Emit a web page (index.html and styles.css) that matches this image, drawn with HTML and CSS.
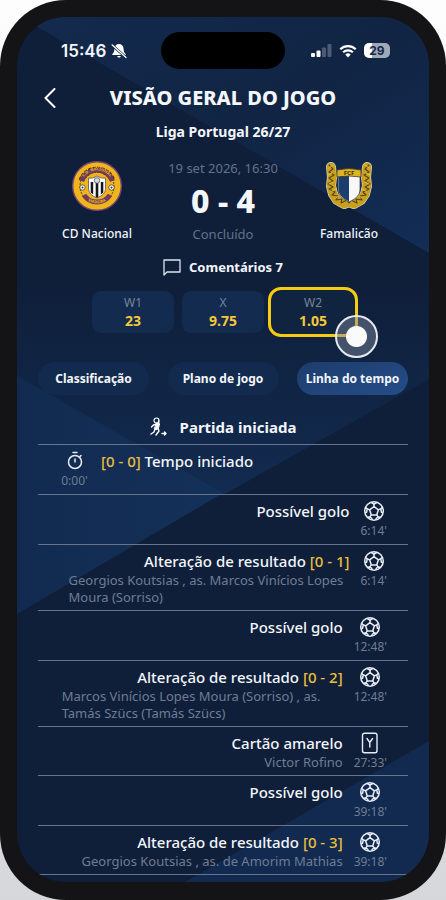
FILE: index.html
```html
<!DOCTYPE html>
<html lang="pt">
<head>
    <meta charset="UTF-8">
    <meta name="viewport" content="width=device-width, initial-scale=1.0">
    <title>Visão geral do jogo</title>
    <link rel="stylesheet" href="styles.css">
</head>
<body>
    <!-- Shared icons -->
    <svg class="sprite" aria-hidden="true">
        <symbol id="ball" viewBox="0 0 22 22">
            <g fill="none" stroke="currentColor" stroke-width="1.5" stroke-linejoin="round">
                <circle cx="11" cy="11" r="9.3"/>
                <path d="M11 6.600l4.400 3.200-1.700 5.100H8.300L6.600 9.800z"/>
                <path d="M11 6.600V4M15.400 9.800l2.400-.9M13.700 14.900l1.600 2.200M8.300 14.900l-1.600 2.200M6.600 9.800l-2.400-.9"/>
                <path d="M7.800 2.400L11 4l3.200-1.600M19.500 7.300l-1.700 1.600.6 3.400 1.600.5M17.800 17.300l-2.500-.2-1.900 1-.7 2M9.300 20.100l-.7-2-1.900-1-2.500.2M2 12.800l1.600-.5.6-3.400-1.700-1.600"/>
            </g>
        </symbol>
    </svg>

    <div class="phone">
        <div class="screen">
            <svg class="backdrop" viewBox="0 0 412 865" preserveAspectRatio="none" aria-hidden="true">
                <defs>
                    <linearGradient id="bgTop" x1="0" y1="0" x2="1" y2="1">
                        <stop offset="0" stop-color="#132b4f"/>
                        <stop offset=".5" stop-color="#112443"/>
                        <stop offset="1" stop-color="#122d56"/>
                    </linearGradient>
                    <linearGradient id="bgMid" x1="0" y1="0" x2="0" y2="1">
                        <stop offset="0" stop-color="#0f1f3a"/>
                        <stop offset="1" stop-color="#122b50"/>
                    </linearGradient>
                    <linearGradient id="bgLeft" x1="0" y1="0" x2="1" y2="0">
                        <stop offset="0" stop-color="#122a50"/>
                        <stop offset="1" stop-color="#143159"/>
                    </linearGradient>
                </defs>
                <path fill="#0f1f3a" d="M0 0h412v865H0z"/>
                <path fill="url(#bgTop)" d="M0 0h412v236L0-2z"/>
                <path fill="url(#bgMid)" d="M0 270h412v92L206 478 0 360z"/>
                <path fill="url(#bgLeft)" d="M0 359l206 117L0 597z"/>
                <path fill="#122a50" d="M412 724v141H168z"/>
            </svg>

            <div class="status-bar">
                <div class="status-left">
                    <span class="clock">15:46</span>
                    <svg width="16" height="16" viewBox="0 0 16 16">
                        <path fill="#fff" d="M8 1c-2.500 0-4.300 1.900-4.500 4.300C3.300 8.500 2.700 9.800 1.300 11.200c-.3.400 0 .8.400.8h12.600c.4 0 .7-.4.400-.8-1.400-1.400-2-2.700-2.200-5.900C12.300 2.900 10.500 1 8 1zM6.200 13h3.600c-.2 1-.9 1.600-1.800 1.600S6.400 14 6.200 13z"/>
                        <path stroke="#122849" stroke-width="2.600" d="M1 2l14 12.500"/>
                        <path stroke="#fff" stroke-width="1.200" stroke-linecap="round" d="M1 1.800l14 12.700"/>
                    </svg>
                </div>
                <div class="island"></div>
                <div class="status-right">
                    <svg width="21" height="14" viewBox="0 0 21 14" fill="#fff">
                        <rect x="0" y="9" width="4" height="4" rx="1"/>
                        <rect x="5.500" y="6.500" width="4" height="6.500" rx="1"/>
                        <rect x="11" y="3.500" width="4" height="9.500" rx="1" opacity=".25"/>
                        <rect x="16.500" y="0" width="4" height="13" rx="1" opacity=".25"/>
                    </svg>
                    <svg width="18" height="14" viewBox="0 0 18 14" fill="none" stroke="#fff" stroke-width="2.200">
                        <path d="M1.300 5.200a11 11 0 0 1 15.400 0M4.100 8.300a7 7 0 0 1 9.800 0"/>
                        <path fill="#fff" stroke="none" d="M9 13.400l-2.700-2.800a3.900 3.900 0 0 1 5.400 0z"/>
                    </svg>
                    <span class="battery">29</span>
                </div>
            </div>

            <header class="top">
                <button class="back" type="button" aria-label="Voltar">
                    <svg width="12" height="20" viewBox="0 0 12 20" fill="none" stroke="#fff" stroke-width="2" stroke-linecap="round" stroke-linejoin="round"><path d="M10.500 1L1.500 10l9 9"/></svg>
                </button>
                <h1>VISÃO GERAL DO JOGO</h1>
            </header>
            <p class="league">Liga Portugal 26/27</p>

            <section class="match">
                <div class="team">
                    <svg width="50" height="50" viewBox="0 0 50 50">
                        <defs>
                            <path id="arcTop" d="M10.500 18a16.500 16.500 0 0 1 29 0"/>
                            <path id="arcBottom" d="M11 36a18.500 18.500 0 0 0 28 0"/>
                        </defs>
                        <circle cx="25" cy="25" r="24.300" fill="#f0b51c" stroke="#7b4575" stroke-width="1.400"/>
                        <circle cx="25" cy="25" r="17" fill="none" stroke="#5d4423" stroke-width="1" stroke-dasharray="2 1"/>
                        <path d="M9.500 19.500a16.500 16.500 0 0 1 31 0" fill="none" stroke="#4a3020" stroke-width="6" stroke-dasharray="3 1"/>
                        <path d="M9.500 20a16.500 16.500 0 0 1 31 0" fill="none" stroke="#713c5c" stroke-width="4.600"/>
                        <path d="M12 34a15.500 15.500 0 0 0 26 0" fill="none" stroke="#713c5c" stroke-width="5"/>
                        <text class="crest-text"><textPath href="#arcTop" startOffset="50%">C.D. NACIONAL</textPath></text>
                        <text class="crest-text"><textPath href="#arcBottom" startOffset="50%">MADEIRA</textPath></text>
                        <path d="M16.500 17q4.500 1 8.500-2 4 3 8.500 2v10c0 5-3 7.500-8.500 10-5.500-2.500-8.500-5-8.500-10z" fill="#fff" stroke="#555" stroke-width=".8"/>
                        <path d="M18.700 21h2.500v12.600l-2.500-2.200zM23.700 21h2.600v15l-1.300.7-1.300-.7zM28.800 21h2.500v10.400l-2.500 2.200z" fill="#17171c"/>
                        <circle cx="25" cy="19.500" r="2.800" fill="#d8d8dc" stroke="#444" stroke-width=".7"/>
                        <g fill="#fff" stroke="#44382a" stroke-width=".8"><circle cx="10.500" cy="26.500" r="2.700"/><circle cx="39.500" cy="26.500" r="2.700"/></g>
                        <g fill="#333"><circle cx="10.500" cy="26.500" r="1"/><circle cx="39.500" cy="26.500" r="1"/></g>
                    </svg>
                    <span class="team-name">CD Nacional</span>
                </div>

                <div class="result">
                    <span class="muted">19 set 2026, 16:30</span>
                    <strong class="score">0 - 4</strong>
                    <span class="muted">Concluído</span>
                </div>

                <div class="team">
                    <svg width="50" height="50" viewBox="0 0 50 50">
                        <g stroke-linejoin="round" stroke-linecap="round" fill="none">
                            <path stroke="#d5d3bd" stroke-width="10" d="M7 6l1 10-1 9 2 8 4 6 7 4 5-2 5 2 7-4 4-6 2-8-1-9 1-10"/>
                            <path stroke="#c9a01c" stroke-width="8.600" d="M7 6l1 10-1 9 2 8 4 6 7 4 5-2 5 2 7-4 4-6 2-8-1-9 1-10"/>
                            <path stroke="#54441c" stroke-width="1.100" d="M5 4l4 4-4 3 5 3-5 3 4 3-5 3 5 3-4 2 6 3-3 3 6 1-2 4 6-1-1 4 6-3 2 3M45 4l-4 4 4 3-5 3 5 3-4 3 5 3-5 3 4 2-6 3 3 3-6 1 2 4-6-1 1 4-6-3-2 3"/>
                            <path stroke="#e9c63c" stroke-width="1" d="M9 4L5 7M8 12l-4 2M9 21l-4 2M8 30l4-2M12 37l4-3M41 4l4 3M42 12l4 2M41 21l4 2M42 30l-4-2M38 37l-4-3"/>
                        </g>
                        <path d="M14 13h22v15c0 6-3 9-11 13-8-4-11-7-11-13z" fill="#f7f7fa" stroke="#333" stroke-width=".7"/>
                        <path d="M14.500 15H25v25.500c-7.500-4-10.500-7-10.500-12.500z" fill="#1d3e6d"/>
                        <path d="M13 9q12-3 24 0v7q-12-2-24 0z" fill="#dfb322" stroke="#403516" stroke-width=".8"/>
                        <text class="crest-initials" x="25" y="14">FCF</text>
                    </svg>
                    <span class="team-name">Famalicão</span>
                </div>
            </section>

            <a class="comments" href="#comentarios">
                <svg width="18" height="17" viewBox="0 0 18 17" fill="none" stroke="#dfe5ee" stroke-width="1.300" stroke-linejoin="round"><path d="M1 16V1h16v12H4z"/></svg>
                Comentários 7
            </a>

            <div class="odds">
                <button class="odd" type="button"><span>W1</span><b>23</b></button>
                <button class="odd" type="button"><span>X</span><b>9.75</b></button>
                <button class="odd odd-selected" type="button"><span>W2</span><b>1.05</b><i class="touch"></i></button>
            </div>

            <nav class="tabs">
                <button type="button">Classificação</button>
                <button type="button">Plano de jogo</button>
                <button class="active" type="button">Linha do tempo</button>
            </nav>

            <section class="timeline">
                <h2>
                    <svg width="18" height="20" viewBox="0 0 18 20" fill="none" stroke="#fff" stroke-linecap="round" stroke-linejoin="round">
                        <circle cx="6.500" cy="3.500" r="2.500" stroke-width="1.200"/>
                        <path fill="#fff" stroke-width="1" d="M7 6l2.500 1-1 4-2 2-2-1z"/>
                        <path stroke-width="1.400" d="M7 7L3.500 8 1.500 10M9 7l-.5-3M5 12l-1 3-3 2M8 11l1 3-3 4"/>
                        <path stroke-width="1.400" d="M12 16.500h4M14.500 15l1.500 1.500-1.500 1.500"/>
                    </svg>
                    Partida iniciada
                </h2>
                <ul>
                    <li class="event event-home">
                        <div class="when">
                            <svg width="20" height="22" viewBox="0 0 20 22" fill="none" stroke="currentColor" stroke-width="1.500" stroke-linecap="round"><circle cx="10" cy="12" r="6.500"/><path d="M8 2.500h4M10 9v3M15 6.500l1-1"/></svg>
                            <time>0:00'</time>
                        </div>
                        <div class="what"><h3><em>[0 - 0]</em> Tempo iniciado</h3></div>
                    </li>
                    <li class="event">
                        <div class="when"><svg width="22" height="22"><use href="#ball"/></svg><time>6:14'</time></div>
                        <div class="what"><h3>Possível golo</h3></div>
                    </li>
                    <li class="event event-detail">
                        <div class="when"><svg width="22" height="22"><use href="#ball"/></svg><time>6:14'</time></div>
                        <div class="what">
                            <h3>Alteração de resultado <em>[0 - 1]</em></h3>
                            <p>Georgios Koutsias , as. Marcos Vinícios Lopes Moura (Sorriso)</p>
                        </div>
                    </li>
                    <li class="event">
                        <div class="when"><svg width="22" height="22"><use href="#ball"/></svg><time>12:48'</time></div>
                        <div class="what"><h3>Possível golo</h3></div>
                    </li>
                    <li class="event event-detail">
                        <div class="when"><svg width="22" height="22"><use href="#ball"/></svg><time>12:48'</time></div>
                        <div class="what">
                            <h3>Alteração de resultado <em>[0 - 2]</em></h3>
                            <p>Marcos Vinícios Lopes Moura (Sorriso) , as. Tamás Szücs (Tamás Szücs)</p>
                        </div>
                    </li>
                    <li class="event event-detail">
                        <div class="when">
                            <svg width="22" height="22" viewBox="0 0 22 22" fill="none" stroke="currentColor" stroke-width="1.400" stroke-linecap="round"><rect x="3.500" y="1.200" width="14.500" height="19.600" rx="2"/><path d="M8 6.500l2.800 4 2.800-4M10.800 10.500v4.500"/></svg>
                            <time>27:33'</time>
                        </div>
                        <div class="what">
                            <h3>Cartão amarelo</h3>
                            <p>Victor Rofino</p>
                        </div>
                    </li>
                    <li class="event">
                        <div class="when"><svg width="22" height="22"><use href="#ball"/></svg><time>39:18'</time></div>
                        <div class="what"><h3>Possível golo</h3></div>
                    </li>
                    <li class="event event-detail">
                        <div class="when"><svg width="22" height="22"><use href="#ball"/></svg><time>39:18'</time></div>
                        <div class="what">
                            <h3>Alteração de resultado <em>[0 - 3]</em></h3>
                            <p>Georgios Koutsias , as. de Amorim Mathias</p>
                        </div>
                    </li>
                </ul>
            </section>
        </div>
    </div>
</body>
</html>
```

FILE: styles.css
```css
* {
    box-sizing: border-box;
    margin: 0;
    padding: 0;
}
body {
    font-family: "Noto Sans", "Open Sans", sans-serif;
    color: #f3f6fa;
    background: linear-gradient(#fdfdfd, #d6d7db);
}
button {
    font: inherit;
    color: inherit;
    border: none;
    background: none;
    cursor: pointer;
}
svg {
    display: block;
    flex: none;
}
.sprite {
    display: none;
}

/* Phone shell */
.phone {
    min-height: 100vh;
    padding: 17px;
    padding-bottom: 18px;
    border-radius: 66px;
    background: #141416;
    display: flex;
}
.screen {
    position: relative;
    z-index: 0;
    flex: 1;
    border-radius: 49px;
    overflow: hidden;
    padding: 0 21px;
}
.backdrop {
    position: absolute;
    inset: 0;
    width: 100%;
    height: 100%;
    z-index: -1;
}

/* Status bar */
.status-bar {
    display: grid;
    grid-template-columns: 1fr 124px 1fr;
    align-items: center;
    padding-top: 15px;
}
.status-left,
.status-right {
    display: flex;
    align-items: center;
}
.status-left {
    gap: 4px;
    padding-left: 23px;
}
.status-right {
    gap: 7px;
    justify-content: flex-end;
    padding-right: 18px;
}
.clock {
    font: 600 17px/20px Inter, sans-serif;
}
.island {
    height: 37px;
    border-radius: 19px;
    background: #000;
}
.battery {
    width: 26px;
    border-radius: 5px;
    background: linear-gradient(90deg, #fff 30%, #a0a9b8 30%);
    color: #13294a;
    font: 700 12px/15px Inter, sans-serif;
    text-align: center;
}

/* Heading */
.top {
    display: grid;
    grid-template-columns: 22px 1fr 22px;
    align-items: center;
    padding-top: 14px;
}
.back {
    justify-self: end;
    padding: 4px;
}
h1 {
    font-size: 20px;
    font-weight: 800;
    line-height: 30px;
    text-align: center;
    white-space: nowrap;
}
.league {
    padding-top: 9px;
    font-size: 14px;
    font-weight: 700;
    line-height: 20px;
    text-align: center;
}

/* Teams and score */
.match {
    display: grid;
    grid-template-columns: 118px 1fr 118px;
    padding-top: 16px;
}
.team {
    display: flex;
    flex-direction: column;
    align-items: center;
    gap: 13px;
    padding-top: 3px;
}
.team-name {
    font-size: 12px;
    font-weight: 500;
    line-height: 20px;
}
.result {
    display: flex;
    flex-direction: column;
    align-items: center;
}
.muted {
    color: #64718a;
    font-size: 13px;
    line-height: 20px;
}
.score {
    font-size: 32px;
    font-weight: 800;
    line-height: 46px;
}
.crest-text {
    font-size: 4px;
    font-weight: 700;
    fill: #f0b51c;
    text-anchor: middle;
}
.crest-initials {
    font-size: 6px;
    font-weight: 700;
    fill: #3b2d12;
    text-anchor: middle;
}
.comments {
    display: flex;
    justify-content: center;
    align-items: center;
    gap: 8px;
    padding-top: 13px;
    color: inherit;
    font-size: 13px;
    font-weight: 700;
    line-height: 20px;
    text-decoration: none;
}

/* Odds */
.odds {
    display: flex;
    justify-content: center;
    gap: 8px;
    padding-top: 14px;
}
.odd {
    position: relative;
    width: 82px;
    padding: 3px 0;
    border-radius: 9px;
    background: #122b4e;
}
.odd span,
.odd b {
    display: block;
    line-height: 18px;
}
.odd span {
    color: #77849a;
    font-size: 12px;
}
.odd b {
    color: #f5c83a;
    font-size: 14px;
}
.odd-selected {
    background: #10233f;
    outline: 3px solid #f6cb13;
    outline-offset: 1px;
}
.touch {
    position: absolute;
    right: -24px;
    bottom: -25px;
    width: 43px;
    height: 43px;
    border: 2px solid #e5e9f0;
    border-radius: 50%;
    background: radial-gradient(circle, #fafafa 10px, rgba(130, 140, 160, .45) 11px);
}

/* Tabs */
.tabs {
    display: grid;
    grid-template-columns: repeat(3, 111px);
    justify-content: space-between;
    padding-top: 29px;
}
.tabs button {
    border-radius: 17px;
    background: #122a4d;
    font-size: 12px;
    font-weight: 700;
    line-height: 33px;
    white-space: nowrap;
}
.tabs .active {
    background: linear-gradient(160deg, #1c3c6c, #264d89);
}

/* Timeline */
.timeline h2 {
    display: flex;
    justify-content: center;
    align-items: center;
    gap: 12px;
    padding: 21px 0 6px;
    border-bottom: 1px solid #66748c;
    font-size: 15px;
    font-weight: 700;
    line-height: 22px;
}
.timeline ul {
    list-style: none;
}
.event {
    display: flex;
    flex-direction: row-reverse;
    gap: 11px;
    padding: 5px 21px;
    border-bottom: 1px solid #66748c;
}
.event-detail {
    padding-bottom: 4px;
}
.event-home {
    flex-direction: row;
}
.when {
    display: flex;
    flex-direction: column;
    align-items: center;
    color: #e8edf4;
}
.event-home .when {
    width: 31px;
}
.when time,
.what p {
    color: #6f7c93;
    font-size: 12px;
    line-height: 17px;
}
.what {
    display: flex;
    flex-direction: column;
    align-items: flex-end;
}
.what h3 {
    font-size: 15px;
    font-weight: 500;
    line-height: 22px;
}
.what em {
    color: #e9bf3c;
    font-style: normal;
}
.what p {
    max-width: 281px;
    font-size: 13px;
}
```
